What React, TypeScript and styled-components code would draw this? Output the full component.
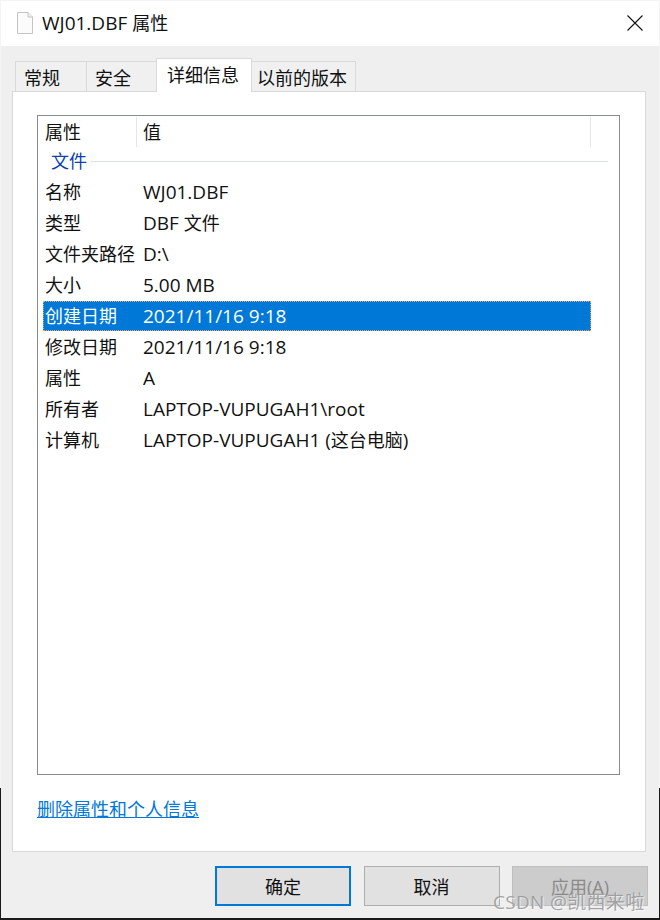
import React from "react";
import styled, { createGlobalStyle } from "styled-components";

const Global = createGlobalStyle`
  html, body { margin: 0; padding: 0; background: #f4f4f4; }
  * { box-sizing: border-box; }
  body { font-family: "Open Sans", "Noto Sans CJK SC", sans-serif; }
`;

const Page = styled.div`
  position: relative;
  width: 660px;
  height: 920px;
  padding: 1px 1px 2px 1px;
  overflow: hidden;
  background:
    linear-gradient(#1a1a1a, #1a1a1a) 0 918px / 660px 2px no-repeat,
    linear-gradient(#1a1a1a, #1a1a1a) 0 788px / 1px 132px no-repeat,
    linear-gradient(#1a1a1a, #1a1a1a) 659px 788px / 1px 132px no-repeat,
    #f4f4f4;
`;

const Dialog = styled.div`
  width: 658px;
  height: 917px;
  background: #efefef;
  display: flex;
  flex-direction: column;
  color: #000;
  font-size: 18px;
`;

const TitleBar = styled.div`
  height: 45px;
  flex: none;
  background: #fff;
  display: flex;
  align-items: center;
  padding: 0 16px 1px 16px;
  gap: 9px;
`;

const TitleText = styled.div`
  flex: 1;
  font-size: 19px;
  line-height: 24px;
  color: #111;
`;

const Cjk = styled.span`
  font-size: 18px;
`;

const Content = styled.div`
  flex: 1;
  display: flex;
  flex-direction: column;
  padding: 12px 0 0 11px;
`;

const TabRow = styled.div`
  display: flex;
  align-items: flex-end;
  height: 34px;
  padding-left: 3px;
  position: relative;
  z-index: 1;
  margin-bottom: -1px;
`;

const Tab = styled.div<{ $w: number; $pad: number; $active?: boolean }>`
  width: ${(p) => p.$w}px;
  height: ${(p) => (p.$active ? 34 : 31)}px;
  margin-left: -1px;
  &:first-child { margin-left: 0; }
  background: ${(p) => (p.$active ? "#fff" : "#f0f0f0")};
  border: 1px solid #d9d9d9;
  border-bottom: ${(p) => (p.$active ? "none" : "1px solid #d9d9d9")};
  position: relative;
  z-index: ${(p) => (p.$active ? 2 : 1)};
  padding: 2px 0 0 ${(p) => p.$pad}px;
  font-size: 18px;
  line-height: 28px;
  white-space: nowrap;
  color: #111;
`;

const Panel = styled.div`
  width: 634px;
  height: 761px;
  background: #fff;
  border: 1px solid #d9d9d9;
  padding: 23px 24px 0 24px;
  display: flex;
  flex-direction: column;
`;

const List = styled.div`
  width: 583px;
  height: 660px;
  border: 1px solid #888b90;
  flex: none;
  padding: 1px 0 0 5px;
`;

const Header = styled.div`
  display: flex;
  height: 30px;
  width: 548px;
`;

const HeaderCell = styled.div<{ $w?: number }>`
  width: ${(p) => (p.$w ? `${p.$w}px` : "auto")};
  flex: ${(p) => (p.$w ? "none" : "1")};
  border-right: 1px solid #e5e5e5;
  padding-left: ${(p) => (p.$w ? 2 : 6)}px;
  font-size: 18px;
  line-height: 31px;
  color: #111;
`;

const GroupRow = styled.div`
  display: flex;
  align-items: center;
  height: 29px;
  padding-left: 8px;
  gap: 4px;
  width: 565px;
`;

const GroupLabel = styled.span`
  color: #0a3fb0;
  font-size: 18px;
  line-height: 26px;
  margin-bottom: 2px;
`;

const GroupLine = styled.div`
  flex: 1;
  height: 1px;
  background: #dcdfea;
`;

const Row = styled.div<{ $selected?: boolean }>`
  display: flex;
  align-items: center;
  height: ${(p) => (p.$selected ? 30 : 31)}px;
  margin-top: ${(p) => (p.$selected ? 1 : 0)}px;
  width: 548px;
  background: ${(p) => (p.$selected ? "#0078d7" : "transparent")};
  color: ${(p) => (p.$selected ? "#fff" : "#111")};
  outline: ${(p) => (p.$selected ? "1px dotted #e8a560" : "none")};
  outline-offset: -1px;
  font-size: 18px;
`;

const NameCell = styled.div`
  width: 100px;
  flex: none;
  padding-left: 2px;
  white-space: nowrap;
  line-height: 28px;
`;

const ValueCell = styled.div`
  font-size: 19px;
  white-space: nowrap;
  line-height: 28px;
`;

const Link = styled.a`
  margin-top: 22px;
  font-size: 18px;
  line-height: 24px;
  color: #0078d7;
  text-decoration: underline;
  align-self: flex-start;
  cursor: pointer;
`;

const Footer = styled.div`
  display: flex;
  justify-content: flex-end;
  gap: 12.5px;
  padding: 14px 11px 0 0;
`;

const Button = styled.div<{ $kind?: "default" | "disabled" }>`
  width: 136px;
  height: 40px;
  display: flex;
  align-items: center;
  justify-content: center;
  font-size: 18px;
  background: ${(p) => (p.$kind === "disabled" ? "#cccccc" : "#e1e1e1")};
  color: ${(p) => (p.$kind === "disabled" ? "#8a8a8a" : "#111")};
  border: ${(p) =>
    p.$kind === "default"
      ? "2px solid #0078d7"
      : p.$kind === "disabled"
      ? "1px solid #bfbfbf"
      : "1px solid #adadad"};
`;

const Watermark = styled.div`
  position: absolute;
  left: 493px;
  top: 889px;
  font-size: 19px;
  letter-spacing: 0.3px;
  line-height: 26px;
  color: rgba(150, 150, 150, 0.85);
  text-shadow: 1px 1px 1px rgba(255, 255, 255, 0.7);
  white-space: nowrap;
  font-family: "Open Sans", "Noto Sans CJK SC", sans-serif;
`;

const FileIcon = () => (
  <svg width="16" height="22" viewBox="0 0 16 22">
    <path d="M0.5 0.5H11L15.5 5V21.5H0.5Z" fill="#fbfbfb" stroke="#c4c4c4" />
    <path d="M11 0.5V5H15.5" fill="#eee" stroke="#c4c4c4" />
  </svg>
);

const CloseIcon = () => (
  <svg width="16" height="16" viewBox="0 0 16 16">
    <path d="M0.5 0.5L15.5 15.5M15.5 0.5L0.5 15.5" stroke="#111" strokeWidth="1.1" fill="none" />
  </svg>
);

const rows: [string, React.ReactNode, boolean?][] = [
  ["名称", "WJ01.DBF"],
  ["类型", <>DBF <Cjk>文件</Cjk></>],
  ["文件夹路径", "D:\\"],
  ["大小", "5.00 MB"],
  ["创建日期", "2021/11/16 9:18", true],
  ["修改日期", "2021/11/16 9:18"],
  ["属性", "A"],
  ["所有者", "LAPTOP-VUPUGAH1\\root"],
  ["计算机", <>LAPTOP-VUPUGAH1 (<Cjk>这台电脑</Cjk>)</>],
];

export default function App() {
  return (
    <Page>
      <Global />
      <Dialog>
        <TitleBar>
          <FileIcon />
          <TitleText>WJ01.DBF <Cjk>属性</Cjk></TitleText>
          <CloseIcon />
        </TitleBar>
        <Content>
          <TabRow>
            <Tab $w={72} $pad={8}>常规</Tab>
            <Tab $w={71} $pad={8}>安全</Tab>
            <Tab $w={96} $pad={10} $active>详细信息</Tab>
            <Tab $w={105} $pad={5}>以前的版本</Tab>
          </TabRow>
          <Panel>
            <List>
              <Header>
                <HeaderCell $w={94}>属性</HeaderCell>
                <HeaderCell>值</HeaderCell>
              </Header>
              <GroupRow>
                <GroupLabel>文件</GroupLabel>
                <GroupLine />
              </GroupRow>
              {rows.map(([k, v, sel]) => (
                <Row key={k} $selected={sel}>
                  <NameCell>{k}</NameCell>
                  <ValueCell>{v}</ValueCell>
                </Row>
              ))}
            </List>
            <Link>删除属性和个人信息</Link>
          </Panel>
          <Footer>
            <Button $kind="default">确定</Button>
            <Button>取消</Button>
            <Button $kind="disabled">应用(A)</Button>
          </Footer>
        </Content>
      </Dialog>
      <Watermark>CSDN @凯西来啦</Watermark>
    </Page>
  );
}
